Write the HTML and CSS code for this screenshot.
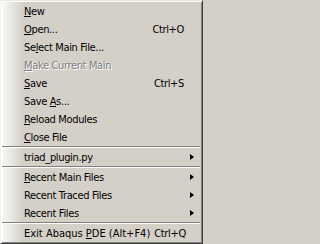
FILE: index.html
```
<!DOCTYPE html>
<html>
<head>
<meta charset="utf-8">
<link rel="stylesheet" href="styles.css">
</head>
<body>
<div class="menu">
  <div class="item"><span class="label"><u>N</u>ew</span></div>
  <div class="item"><span class="label"><u>O</u>pen...</span><span class="key">Ctrl+O</span></div>
  <div class="item"><span class="label">Se<u>l</u>ect Main File...</span></div>
  <div class="item disabled"><span class="label"><u>M</u>ake Current Main</span></div>
  <div class="item"><span class="label"><u>S</u>ave</span><span class="key">Ctrl+S</span></div>
  <div class="item"><span class="label">Save <u>A</u>s...</span></div>
  <div class="item"><span class="label"><u>R</u>eload Modules</span></div>
  <div class="item"><span class="label"><u>C</u>lose File</span></div>
  <div class="sep"></div>
  <div class="item sub"><span class="label">triad_plugin.py</span><span class="arrow"></span></div>
  <div class="sep"></div>
  <div class="item sub"><span class="label"><u>R</u>ecent Main Files</span><span class="arrow"></span></div>
  <div class="item sub"><span class="label">Recent Traced Files</span><span class="arrow"></span></div>
  <div class="item sub"><span class="label">Recent Files</span><span class="arrow"></span></div>
  <div class="sep"></div>
  <div class="item"><span class="label exit">Exit Abaqus <u>P</u>DE (Alt+F4)</span><span class="key">Ctrl+Q</span></div>
</div>
</body>
</html>
```
FILE: styles.css
```
html, body {
  margin: 0;
  padding: 0;
  background: #d4d0c8;
}
.menu {
  box-sizing: border-box;
  width: 203px;
  height: 244px;
  border-style: solid;
  border-width: 1px;
  border-color: #e8e6e1 #404040 #404040 #f4f3f0;
  box-shadow: inset 1px 1px 0 #ffffff, inset -1px -1px 0 #808080;
  background: linear-gradient(to right, #fbfbfa 0px, #ecebe7 8px, #d4d0c8 22px) #d4d0c8;
  padding: 1px;
  font-family: "DejaVu Sans Condensed", "DejaVu Sans", sans-serif;
  font-stretch: condensed;
  font-size: 11px;
  letter-spacing: -0.35px;
  color: #000;
  display: flex;
  flex-direction: column;
}
.item {
  height: 18px;
  display: flex;
  align-items: center;
  padding-left: 22px;
  padding-right: 17px;
  white-space: nowrap;
}
.label {
  flex: 1;
}
.exit {
  letter-spacing: 0;
}
.key {
  margin-left: 4px;
}
.item u {
  text-decoration: underline;
  text-underline-offset: 1px;
}
.disabled {
  color: #808080;
  text-shadow: 1px 1px 0 #ffffff;
}
.sub {
  padding-right: 7px;
}
.arrow {
  width: 0;
  height: 0;
  border-style: solid;
  border-width: 3.5px 0 3.5px 4px;
  border-color: transparent transparent transparent #000;
}
.sep {
  height: 0;
  border-top: 1px solid #808080;
  border-bottom: 1px solid #ffffff;
  margin: 0 1px 0 0;
}
```
